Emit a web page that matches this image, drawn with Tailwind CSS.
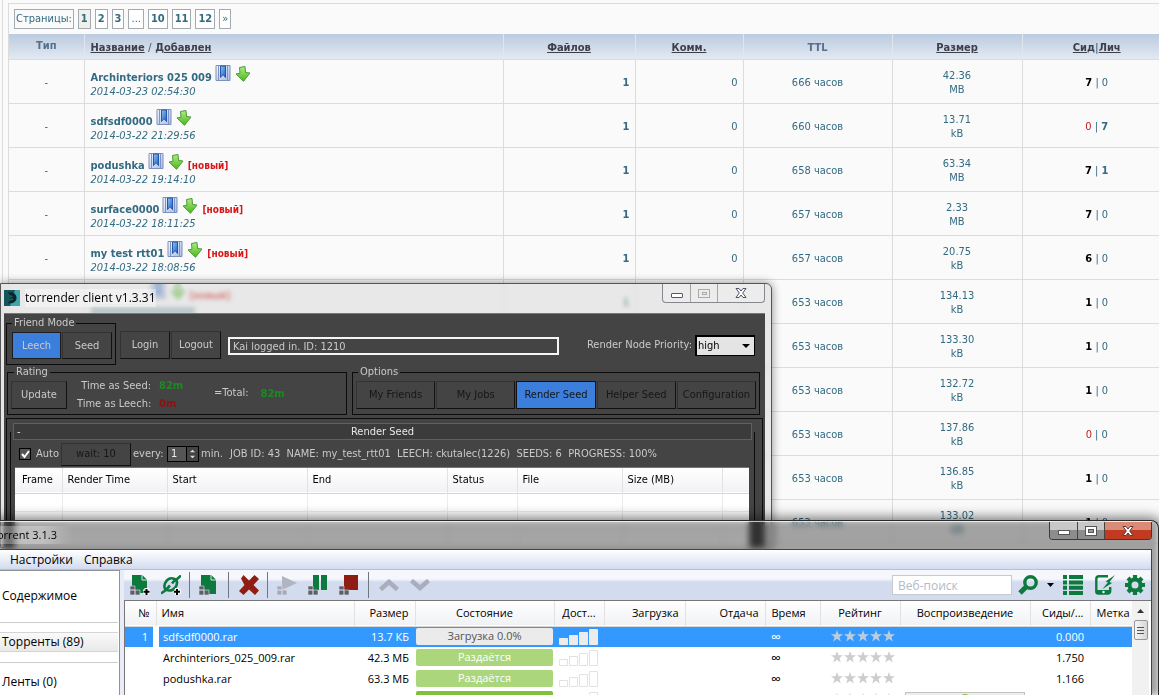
<!DOCTYPE html>
<html lang="ru">
<head>
<meta charset="utf-8">
<title>torrender</title>
<script src="https://cdn.jsdelivr.net/npm/@tailwindcss/browser@4"></script>
</head>
<body class="relative h-screen overflow-hidden bg-[#fafafa] font-['DejaVu_Sans_Condensed','Noto_Sans',sans-serif] text-[11px] leading-[14px] text-[#336b82]">

<svg class="absolute size-0" aria-hidden="true">
  <defs>
    <linearGradient id="gb" x1="0" y1="0" x2="1" y2="1"><stop offset="0" stop-color="#8fc4f6"/><stop offset="1" stop-color="#1d5fc4"/></linearGradient>
    <linearGradient id="gp" x1="0" y1="0" x2="1" y2="1"><stop offset="0" stop-color="#f4f8ff"/><stop offset="1" stop-color="#a9bbe0"/></linearGradient>
    <linearGradient id="gg" x1="0" y1="0" x2="0" y2="1"><stop offset="0" stop-color="#b4ec85"/><stop offset="1" stop-color="#45b818"/></linearGradient>
  </defs>
  <symbol id="book" viewBox="0 0 16 16"><path d="M1 .5h14v15H1z" fill="url(#gp)" stroke="#7b8fc0"/><path d="M3.500 1v14M12.500 1v14" stroke="#7d93c6"/><path d="M5.500 1h5v11.500L8 9.500l-2.500 3z" fill="url(#gb)" stroke="#2457a8"/></symbol>
  <symbol id="down" viewBox="0 0 16 16"><path d="M4.500 1.500L10 .5l.5 6 4.500.5L8.500 15.300 1 8l4-.8z" fill="url(#gg)" stroke="#4a9a38"/></symbol>
  <symbol id="star" viewBox="0 0 12 12"><path d="M6 0l1.500 4.300H12L8.400 7l1.400 4.500L6 8.800 2.200 11.500 3.600 7 0 4.300h4.500z"/></symbol>
</svg>

<main class="ml-[2px] min-h-full border-l border-[#dcdcdc] pl-[5px] pt-[3px]">
  <div class="border-l border-t border-[#dcdcdc]">
    <nav class="flex h-[30px] items-center gap-1 pl-[5px]" id="pages">
      <span class="border border-[#a3abb0] px-px leading-[18px]">Страницы:</span>
    </nav>
    <table class="w-full table-fixed border-collapse">
      <colgroup><col class="w-[75px]"><col><col class="w-[132px]"><col class="w-[108px]"><col class="w-[149px]"><col class="w-[130px]"><col class="w-[137px]"></colgroup>
      <thead>
        <tr class="h-[25px] bg-linear-to-b from-[#bccbe0] to-[#e2e9f2] text-[#566f8b]">
          <th class="border-r border-[#dfe6ee]">Тип</th>
          <th class="border-r border-[#dfe6ee] pl-[6px] pt-[3px] text-left"><a href="#" class="text-[#3d4047] underline">Название</a> / <a href="#" class="text-[#3d4047] underline">Добавлен</a></th>
          <th class="border-r border-[#dfe6ee] pt-[3px]"><a href="#" class="text-[#3d4047] underline">Файлов</a></th>
          <th class="border-r border-[#dfe6ee] pt-[3px]"><a href="#" class="text-[#3d4047] underline">Комм.</a></th>
          <th class="border-r border-[#dfe6ee] pt-[3px]">TTL</th>
          <th class="border-r border-[#dfe6ee] pt-[3px]"><a href="#" class="text-[#3d4047] underline">Размер</a></th>
          <th class="pl-3 pt-[3px]"><a href="#" class="text-[#3d4047] underline">Сид</a>|<a href="#" class="text-[#3d4047] underline">Лич</a></th>
        </tr>
      </thead>
      <tbody id="rows"></tbody>
    </table>
  </div>
</main>

<!-- torrender client window -->
<section class="absolute left-0 top-[283px] flex h-[265px] w-[772px] flex-col rounded-tr-md border border-[#555] bg-[#d8d8d8]/55 pl-[3px] pr-[6px] shadow-[0_0_10px_rgba(0,0,0,.45)] backdrop-blur-[2px]">
  <header class="flex h-[29px] shrink-0 items-start">
    <svg class="mt-[6px] size-4" viewBox="0 0 16 16"><rect width="16" height="16" fill="#3fa5a8"/><path d="M0 0h11L6 16H0z" fill="#15565c"/><path d="M4 2.500c5-1 8.500 1.500 8.500 5.500s-4 6-8.500 5l2-2.500c2 0 3-1 3-1.800L5 8l4-1c0-1.200-1-1.800-3-1.800z" fill="#08262b"/></svg>
    <h1 class="ml-[5px] mt-[5px] bg-white/40 font-['Open_Sans',sans-serif] text-[12px] leading-[18px] text-black">torrender client v1.3.31</h1>
    <div class="ml-auto flex h-[19px] w-[103px] rounded-b border border-t-0 border-[#85898d] bg-[#ececec]">
      <button class="flex w-[28px] items-center justify-center border-r border-[#a5a5a5]" aria-label="Minimize"><span class="mt-1 h-[5px] w-3 rounded-[1px] border border-[#555a66] bg-white"></span></button>
      <button class="flex w-[27px] items-center justify-center border-r border-[#a5a5a5]" aria-label="Maximize"><span class="flex h-[9px] w-3 items-center justify-center border border-[#aaa]"><span class="h-[3px] w-[5px] border border-[#aaa]"></span></span></button>
      <button class="flex flex-1 items-center justify-center" aria-label="Close"><svg class="h-[10px] w-3" viewBox="0 0 12 10"><path d="M1 .5h3l2 2.500 2-2.500h3L7.700 5 11 9.500H8L6 7 4 9.500H1L4.300 5z" fill="#fff" stroke="#4d5264"/></svg></button>
    </div>
  </header>
  <div class="flex min-h-0 flex-1 flex-col border-t border-[#777] bg-[#444] px-[2px] text-[#c9c9c9]">
    <div class="flex h-[51px] shrink-0 items-start">
      <fieldset class="mt-[2px] flex h-[49px] w-[110px] gap-px border border-[#0c0c0c] pl-[5px] pr-[3px] pt-[2px]">
        <legend class="px-[2px]">Friend Mode</legend>
        <button class="h-[27px] w-[49px] border border-[#1c1c1c] bg-[#3c7edb]">Leech</button>
        <button class="h-[27px] w-[50px] border border-[#111] border-t-[#333] border-l-[#333]">Seed</button>
      </fieldset>
      <button class="ml-[4px] mt-[17px] h-[28px] w-[50px] border border-[#111] border-l-[#333] border-t-[#333]">Login</button>
      <button class="ml-px mt-[17px] h-[28px] w-[50px] border border-[#111] border-l-[#333] border-t-[#333]">Logout</button>
      <input aria-label="Status" readonly value="Kai logged in. ID: 1210" class="ml-[7px] mt-[23px] h-[18px] w-[331px] border-2 border-[#f4f4f4] bg-transparent px-[3px] outline-none">
      <label for="prio" class="ml-auto mt-[24px]">Render Node Priority:</label>
      <div class="relative ml-[3px] mr-[8px] mt-[21px]">
        <select id="prio" class="h-[21px] w-[60px] appearance-none border-2 border-r border-b border-black bg-[#e4e4e4] pl-px text-black"><option>high</option></select>
        <svg class="pointer-events-none absolute right-[5px] top-[9px] h-[4px] w-[8px]" viewBox="0 0 8 4"><path d="M0 0h8L4 4z"/></svg>
      </div>
    </div>
    <div class="flex h-[53px] shrink-0 gap-[5px] pl-px">
      <fieldset class="flex h-[50px] w-[340px] items-start border border-[#0c0c0c] pl-[3px] pt-[2px]">
        <legend class="ml-[3px] px-[2px]">Rating</legend>
        <div class="flex w-full">
          <button class="h-[28px] w-[56px] border border-[#111] border-l-[#333] border-t-[#333]">Update</button>
          <dl class="ml-[10px] grid grid-cols-[74px_32px] grid-rows-[18px_18px] gap-x-[8px] -mt-[4px] text-right leading-[18px]">
            <dt class="whitespace-nowrap">Time as Seed:</dt><dd class="text-left font-bold text-[#1b8a22]">82m</dd>
            <dt class="whitespace-nowrap">Time as Leech:</dt><dd class="text-left font-bold text-[#8c1212]">0m</dd>
          </dl>
          <p class="ml-[23px] leading-[24px]">=Total:</p><p class="ml-[12px] leading-[26px] font-bold text-[#1b8a22]">82m</p>
        </div>
      </fieldset>
      <fieldset class="flex h-[50px] w-[408px] gap-px border border-[#0c0c0c] px-[3px] pt-[2px] text-[#161616]">
        <legend class="ml-[2px] px-[2px] text-[#c9c9c9]">Options</legend>
        <button class="h-[28px] flex-1 border border-[#111] border-l-[#333] border-t-[#333]">My Friends</button>
        <button class="h-[28px] flex-1 border border-[#111] border-l-[#333] border-t-[#333]">My Jobs</button>
        <button class="h-[28px] flex-1 border border-[#111] bg-[#3c7edb]">Render Seed</button>
        <button class="h-[28px] flex-1 border border-[#111] border-l-[#333] border-t-[#333]">Helper Seed</button>
        <button class="h-[28px] flex-1 border border-[#111] border-l-[#333] border-t-[#333]">Configuration</button>
      </fieldset>
    </div>
    <div class="flex min-h-0 flex-1 flex-col border border-b-0 border-[#0c0c0c] pl-[3px] pr-[7px] pt-[4px]">
      <button class="relative mx-[3px] h-[17px] shrink-0 border border-[#606060] bg-[#3b3b3b] text-[#e6e6e6]"><span class="absolute left-[3px]">-</span>Render Seed</button>
      <div class="-mt-[8px] flex min-h-0 flex-1 flex-col border-x border-[#0c0c0c] pl-[4px] pr-[5px] pt-[9px]">
        <div class="flex h-[26px] shrink-0 items-center whitespace-pre pl-[4px]">
          <label class="flex items-center gap-[5px]"><input type="checkbox" checked class="peer sr-only"><span class="flex size-[12px] items-center justify-center border border-black bg-[#555]"><svg class="size-[9px]" viewBox="0 0 9 9"><path d="M1 4l2.500 3L8 1" fill="none" stroke="#fff" stroke-width="2"/></svg></span>Auto</label>
          <button class="ml-[2px] h-[23px] w-[70px] border border-[#111] border-l-[#333] border-t-[#333] text-[#161616]">wait: 10</button>
          <label for="every" class="ml-[2px] w-[34px]">every:</label>
          <span class="flex h-[16px] w-[32px] border border-black"><input id="every" value="1" class="w-[18px] bg-[#555] pl-[3px] text-[#eee] outline-none"><svg class="h-full w-[13px] border-l border-black" viewBox="0 0 13 14"><path d="M6.500 2l3 3h-6zM6.500 12l3-3h-6z" fill="#ddd"/></svg></span>
          <span class="ml-[2px] w-[29px]">min.</span>
          <span>JOB ID: 43  NAME: my_test_rtt01  LEECH: ckutalec(1226)  SEEDS: 6  PROGRESS: 100%</span>
        </div>
        <div class="min-h-0 flex-1 border-t border-[#777] bg-white text-black">
          <table class="w-full table-fixed border-collapse">
            <colgroup><col class="w-[47px]"><col class="w-[105px]"><col class="w-[140px]"><col class="w-[140px]"><col class="w-[70px]"><col class="w-[105px]"><col class="w-[100px]"><col></colgroup>
            <thead class="text-left"><tr class="h-[25px] border-b border-[#d5d5d5] bg-linear-to-b from-white to-[#f1f2f4]">
              <th class="border-r border-[#e2e2e2] pl-[7px] font-normal">Frame</th><th class="border-r border-[#e2e2e2] pl-[5px] font-normal">Render Time</th><th class="border-r border-[#e2e2e2] pl-[5px] font-normal">Start</th><th class="border-r border-[#e2e2e2] pl-[5px] font-normal">End</th><th class="border-r border-[#e2e2e2] pl-[5px] font-normal">Status</th><th class="border-r border-[#e2e2e2] pl-[5px] font-normal">File</th><th class="border-r border-[#e2e2e2] pl-[5px] font-normal">Size (MB)</th><th></th>
            </tr></thead>
            <tbody id="frames"></tbody>
          </table>
        </div>
      </div>
    </div>
  </div>
</section>

<!-- torrent 3.1.3 window -->
<section class="absolute -left-1 bottom-0 right-0 top-[520px] flex flex-col rounded-tr-lg border border-b-0 border-[#2b2b2b] bg-white/5 pr-[6px] shadow-[0_0_12px_3px_rgba(0,0,0,.5)] backdrop-blur-[3px] backdrop-brightness-[.63]">
  <header class="flex h-[28px] shrink-0 items-start border-t border-white/70">
    <h2 class="mt-[4px] bg-linear-to-r from-white/30 from-60% to-transparent pr-4 font-['Open_Sans',sans-serif] text-[11px] leading-[18px] text-black">orrent 3.1.3</h2>
    <div class="ml-auto flex h-[18px] w-[103px] overflow-hidden rounded-b border border-t-0 border-[#3a3a3a]">
      <button class="flex w-[28px] items-center justify-center border-r border-[#444] bg-linear-to-b from-[#c8c8c8] from-50% to-[#8d8d8d] to-50%" aria-label="Minimize"><span class="mt-1 h-[5px] w-3 border border-[#555] bg-white"></span></button>
      <button class="flex w-[27px] items-center justify-center border-r border-[#444] bg-linear-to-b from-[#c8c8c8] from-50% to-[#8d8d8d] to-50%" aria-label="Maximize"><span class="flex h-[10px] w-3 items-center justify-center border border-[#555] bg-white"><span class="h-[4px] w-[6px] border border-[#555] bg-[#999]"></span></span></button>
      <button class="flex flex-1 items-center justify-center bg-linear-to-b from-[#dc8a78] from-45% to-[#c23a1f] to-50%" aria-label="Close"><svg class="h-[10px] w-3" viewBox="0 0 12 10"><path d="M1 .5h3l2 2.500 2-2.500h3L7.700 5 11 9.500H8L6 7 4 9.500H1L4.300 5z" fill="#fff" stroke="#5a3a3a"/></svg></button>
    </div>
  </header>
  <div class="flex min-h-0 flex-1 flex-col border-r border-t border-[#444] bg-[#e9ecf6] font-['Open_Sans',sans-serif] text-[11px] text-black">
    <nav class="flex h-5 shrink-0 gap-[11px] border-b border-[#b9bfcc] bg-linear-to-b from-white to-[#d3dbef] pl-[13px] text-[12px] leading-5"><a href="#">Настройки</a><a href="#">Справка</a></nav>
    <div class="flex min-h-0 flex-1">
      <aside class="flex w-[123px] shrink-0 flex-col border-r border-t border-[#8d929b] bg-white pr-px text-[12px] leading-[18px]">
        <a href="#" class="h-[52px] border-b border-[#ccc] pl-[5px] pt-[16px]">Содержимое</a>
        <a href="#" class="mt-[9px] h-[20px] border-y border-[#d4d4d4] bg-linear-to-b from-[#fafafa] to-[#e9e9e9] pl-[5px]">Торренты (89)</a>
        <a href="#" class="mt-[10px] border-t border-[#ccc] pl-[5px] pt-[10px]">Ленты (0)</a>
      </aside>
      <div class="ml-[4px] flex min-w-0 flex-1 flex-col">
        <div class="flex h-[30px] shrink-0 items-center bg-linear-to-b from-[#f6f7fc] from-30% to-[#d3dbee] to-40% pl-[6px]">
          <button aria-label="Add torrent"><svg class="size-5" viewBox="0 0 20 20"><path d="M2 0h10l5 5v13H2z" fill="#0c7a3c"/><path d="M12 0v5h5" fill="#0c7a3c" stroke="#dfe4f2"/><g fill="#5d5f66" stroke="#dfe4f2" stroke-width=".6"><path d="M0 11h5v4H0zM0 15h5v5H0zM5 15h5v5H5z"/></g><path d="M16.500 13v7M13 16.500h7" stroke="#fff" stroke-width="4"/><path d="M16.500 14v6M13.500 16.800h6" stroke="#000" stroke-width="2"/></svg></button>
          <button class="ml-[11px]" aria-label="Add from URL"><svg class="size-5" viewBox="0 0 20 20"><g fill="none" stroke="#0c7a3c" stroke-width="2.600"><path d="M0 18.500l5-3.500M15 5l5-4.500M4.500 15C1 9 7 2 12 3.500l2.500.8L11 8.500M15.500 5c2 6-3 11-7.500 10.500l-3-.7L9 10.500"/></g><path d="M16 13v7M13 16.500h7" stroke="#fff" stroke-width="4"/><path d="M16 14v6M13 16.800h6" stroke="#000" stroke-width="2"/></svg></button>
          <span class="ml-[8px] h-[26px] w-px bg-[#70757f]"></span>
          <button class="ml-[9px]" aria-label="Create torrent"><svg class="size-5" viewBox="0 0 20 20"><path d="M2 0h10l5 5v14H2z" fill="#0c7a3c"/><path d="M12 0v5h5" fill="#0c7a3c" stroke="#dfe4f2"/><g fill="#5d5f66" stroke="#dfe4f2" stroke-width=".6"><path d="M0 11h5v4H0zM0 15h5v5H0zM5 15h5v5H5z"/></g></svg></button>
          <span class="ml-[9px] h-[26px] w-px bg-[#70757f]"></span>
          <button class="ml-[10px]" aria-label="Remove"><svg class="size-5" viewBox="0 0 20 20"><path d="M2 3.500L4.500 0 10 5.500 15.500 0 20 4l-5.500 6 5.500 5.500-4 4.500-6-5.500L4.500 20 0 16l5.500-6z" fill="#8f1d14"/></svg></button>
          <span class="ml-[8px] h-[26px] w-px bg-[#70757f]"></span>
          <button class="ml-[9px]" aria-label="Start"><svg class="size-5" viewBox="0 0 20 20"><path d="M5 1l15 7L5 15z" fill="#b0b5c1"/><g fill="#a5aab6" stroke="#dfe4f2" stroke-width=".6"><path d="M0 11h5v4H0zM0 15h5v5H0zM5 15h5v5H5z"/></g></svg></button>
          <button class="ml-[11px]" aria-label="Pause"><svg class="size-5" viewBox="0 0 20 20"><path d="M5 0h6v15H5zM13 0h6v15h-6z" fill="#0c7a3c"/><g fill="#5d5f66" stroke="#dfe4f2" stroke-width=".6"><path d="M0 11h5v4H0zM0 15h5v5H0zM5 15h5v5H5z"/></g></svg></button>
          <button class="ml-[11px]" aria-label="Stop"><svg class="size-5" viewBox="0 0 20 20"><path d="M5 0h14v15H5z" fill="#8f1d14"/><g fill="#5d5f66" stroke="#dfe4f2" stroke-width=".6"><path d="M0 11h5v4H0zM0 15h5v5H0zM5 15h5v5H5z"/></g></svg></button>
          <span class="ml-[9px] h-[26px] w-px bg-[#70757f]"></span>
          <button class="ml-[10px]" aria-label="Up"><svg class="h-3 w-5" viewBox="0 0 20 12"><path d="M1.500 10.500L10 3l8.500 7.500" fill="none" stroke="#a9aebd" stroke-width="4.600"/></svg></button>
          <button class="ml-[11px]" aria-label="Down"><svg class="h-3 w-5" viewBox="0 0 20 12"><path d="M1.500 1.500L10 9l8.500-7.500" fill="none" stroke="#a9aebd" stroke-width="4.600"/></svg></button>
          <input placeholder="Веб-поиск" aria-label="Веб-поиск" class="ml-auto h-5 w-[120px] border border-[#c6c9d4] bg-white px-[5px] text-[12px] outline-none placeholder:text-[#b3bac8]">
          <button class="ml-[6px]" aria-label="Search"><svg class="size-5" viewBox="0 0 20 20"><circle cx="12.500" cy="7.500" r="5.700" fill="none" stroke="#0c7a3c" stroke-width="3.400"/><path d="M8.500 11.500L2 18" stroke="#0c7a3c" stroke-width="5"/></svg></button>
          <svg class="ml-[9px] h-1 w-[7px]" viewBox="0 0 7 4"><path d="M0 0h7L3.500 4z"/></svg>
          <button class="ml-[9px]" aria-label="List"><svg class="size-5" viewBox="0 0 20 20"><path d="M0 0h4v4H0zM0 5.500h4v4H0zM0 10.700h4v4H0zM0 16h4v4H0zM6 0h14v4H6zM6 5.500h14v4H6zM6 10.700h14v4H6zM6 16h14v4H6z" fill="#0c7a3c"/></svg></button>
          <button class="ml-3" aria-label="Remote"><svg class="size-5" viewBox="0 0 20 20"><path d="M13 1.300H4Q1.300 1.300 1.300 4v12.500q0 2 2.200 2h9q2.700 0 2.700-2.500v-4" fill="none" stroke="#0c7a3c" stroke-width="2.400"/><path d="M1.500 15h13v4h-13z" fill="#0c7a3c"/><circle cx="8.500" cy="17" r="1.200" fill="#fff"/><path d="M20 0l-9.500 6.500 2.500.8L7.500 14l9.500-6-2.500-1z" fill="#0c7a3c"/></svg></button>
          <button class="ml-[10px] mr-[6px]" aria-label="Settings"><svg class="size-5" viewBox="0 0 20 20"><circle cx="10" cy="10" r="5.500" fill="none" stroke="#0c7a3c" stroke-width="4"/><path d="M10 0v4M10 16v4M0 10h4M16 10h4M3 3l3 3M14 14l3 3M17 3l-3 3M6 14l-3 3" stroke="#0c7a3c" stroke-width="4.200"/></svg></button>
        </div>
        <div class="flex min-h-0 flex-1 border-l border-t border-[#777] bg-white pr-[2px]">
          <div class="min-w-0 flex-1 overflow-hidden">
            <table class="w-full table-fixed border-collapse whitespace-nowrap">
              <colgroup><col class="w-[31px]"><col><col class="w-[61px]"><col class="w-[139px]"><col class="w-[50px]"><col class="w-[81px]"><col class="w-[80px]"><col class="w-[55px]"><col class="w-[80px]"><col class="w-[130px]"><col class="w-[60px]"><col class="w-[42px]"></colgroup>
              <thead><tr class="h-[25px] border-b border-[#d5d5d5] bg-linear-to-b from-white to-[#f1f2f4]">
                <th class="border-r border-[#e2e2e2] pr-[6px] text-right font-normal">№</th><th class="border-r border-[#e2e2e2] pl-[5px] text-left font-normal">Имя</th><th class="border-r border-[#e2e2e2] pr-[6px] text-right font-normal">Размер</th><th class="border-r border-[#e2e2e2] font-normal">Состояние</th><th class="border-r border-[#e2e2e2] font-normal">Дост...</th><th class="border-r border-[#e2e2e2] pr-[6px] text-right font-normal">Загрузка</th><th class="border-r border-[#e2e2e2] pr-[6px] text-right font-normal">Отдача</th><th class="border-r border-[#e2e2e2] pl-[6px] text-left font-normal">Время</th><th class="border-r border-[#e2e2e2] font-normal">Рейтинг</th><th class="border-r border-[#e2e2e2] font-normal">Воспроизведение</th><th class="border-r border-[#e2e2e2] pr-[6px] text-right font-normal">Сиды/...</th><th class="pl-[6px] text-left font-normal">Метка</th>
              </tr></thead>
              <tbody id="torrents"></tbody>
            </table>
          </div>
          <div class="flex w-[17px] shrink-0 flex-col items-center bg-[#f1f1f1] pt-[8px]">
            <svg class="h-1 w-[7px]" viewBox="0 0 7 4"><path d="M0 4h7L3.500 0z" fill="#333"/></svg>
            <span class="mt-[7px] flex h-[20px] w-[14px] flex-col items-center justify-center gap-px rounded-[2px] border border-[#979797] bg-linear-to-r from-[#f6f6f6] to-[#d6d6d6]"><i class="h-px w-[7px] bg-[#555]"></i><i class="mt-px h-px w-[7px] bg-[#555]"></i><i class="mt-px h-px w-[7px] bg-[#555]"></i></span>
          </div>
        </div>
      </div>
    </div>
  </div>
</section>

<script>
const pages = ['1','2','3','…','10','11','12','»'];
document.getElementById('pages').insertAdjacentHTML('beforeend', pages.map((p, i) =>
  `<a href="#" class="border border-[#a3abb0] px-[2px] leading-[18px] ${i === 0 ? 'bg-[#efefec]' : 'bg-white'} ${/\d/.test(p) ? 'font-bold' : ''}">${p === '…' ? '...' : p}</a>`).join(''));

const N = '<b class="font-bold text-black">', R = '<span class="text-[#c02020]">', B = '<b class="font-bold">';
const rows = [
  ['Archinteriors 025 009','2014-03-23 02:54:30',0,'666','42.36','MB',N+'7</b>','0'],
  ['sdfsdf0000','2014-03-22 21:29:56',0,'660','13.71','kB',R+'0</span>',B+'7</b>'],
  ['podushka','2014-03-22 19:14:10',1,'658','63.34','MB',N+'7</b>',B+'1</b>'],
  ['surface0000','2014-03-22 18:11:25',1,'657','2.33','MB',N+'7</b>','0'],
  ['my test rtt01','2014-03-22 18:08:56',1,'657','20.75','kB',N+'6</b>','0'],
  ['','',1,'653','134.13','kB',N+'1</b>','0'],
  ['','',0,'653','133.30','kB',N+'1</b>','0'],
  ['','',0,'653','132.72','kB',N+'1</b>','0'],
  ['','',0,'653','137.86','kB',R+'0</span>','0'],
  ['','',0,'653','136.85','kB',N+'1</b>','0'],
  ['','',0,'653','133.02','kB',N+'1</b>','0'],
];
document.getElementById('rows').innerHTML = rows.map((r, i) => `<tr class="h-[44px] border-y border-[#dcdcdc] [&>td]:pt-[4px]">
<td class="border-r border-[#dcdcdc] text-center">${i < 5 ? '-' : ''}</td>
<td class="border-r border-[#dcdcdc] pl-[6px]"><div class="flex h-[18px] items-end whitespace-nowrap"><a href="#" class="font-bold">${r[0] || '<span class="block w-[56px]"></span>'}</a>${r[0] || r[2] ? '<svg class="mb-[4px] ml-[3px] size-4"><use href="#book"/></svg><svg class="mb-[3px] ml-[4px] size-4"><use href="#down"/></svg>' : ''}${r[2] ? '<b class="ml-[4px] text-[10px] text-[#d81818]">[новый]</b>' : ''}</div><i class="block h-[14px]">${r[1] || (r[2] ? '<span class="mt-1 block h-2 w-[104px] bg-[#336b82]/50"></span>' : '')}</i></td>
<td class="border-r border-[#dcdcdc] pr-[5px] text-right font-bold">${i < 6 ? '1' : ''}</td>
<td class="border-r border-[#dcdcdc] pr-[5px] text-right">${i < 5 ? '0' : ''}</td>
<td class="border-r border-[#dcdcdc] text-center">${r[3]} часов</td>
<td class="border-r border-[#dcdcdc] text-center">${r[4]}<br>${r[5]}</td>
<td class="pl-3 text-center">${r[6]} | ${r[7]}</td></tr>`).join('');

document.getElementById('frames').innerHTML = [0,1,2,3].map(() => '<tr class="h-[18px] border-b border-[#ececec]">' + '<td class="border-r border-[#ececec]"></td>'.repeat(7) + '<td></td></tr>').join('');

const bars = sel => `<svg class="mx-auto h-4 w-10" viewBox="0 0 40 16" fill="${sel ? '#ececec' : '#fff'}" stroke="${sel ? '#ececec' : '#e2e2e2'}"><path d="M.5 9.500h8v6h-8zM10.500 6.500h8v9h-8zM20.500 3.500h8v12h-8zM30.500.5h8v15h-8z"/></svg>`;
const stars = sel => `<div class="flex justify-center gap-px pb-[2px] pl-[6px] ${sel ? 'fill-[#bccde0]' : 'fill-[#cdcdcd]'}">` + '<svg class="size-3"><use href="#star"/></svg>'.repeat(5) + '</div>';
const ts = [
  ['1','sdfsdf0000.rar','13.7 КБ','Загрузка 0.0%','∞','0.000','bg-[#ebebeb] text-[#555]'],
  ['','Archinteriors_025_009.rar','42.3 МБ','Раздаётся','∞','1.750','bg-[#abd67c] text-white'],
  ['','podushka.rar','63.3 МБ','Раздаётся','∞','1.166','bg-[#abd67c] text-white'],
  ['','','','','','','bg-[#7fc13c]'],
];
document.getElementById('torrents').innerHTML = ts.map((t, i) => `<tr class="h-[21px] ${i ? '' : 'bg-[#3399ff] text-white'}">
<td class="pr-[5px] text-right">${t[0]}</td>
<td class="border-l-[6px] border-white pl-[4px]">${t[1]}</td>
<td class="pr-[6px] text-right">${t[2]}</td>
<td class="px-px"><div class="h-[17px] rounded-[2px] text-center leading-[16px] ${t[6]}">${t[3]}</div></td>
<td class="p-0">${bars(i === 0)}</td><td></td><td></td>
<td class="pl-[6px] text-[14px]">${t[4]}</td>
<td>${stars(i === 0)}</td>
<td class="px-[5px]">${i === 3 ? '<div class="h-[16px] border border-[#c2c2c2] bg-[#ededed]"><svg class="mx-auto mt-px size-3" viewBox="0 0 12 12"><circle cx="6" cy="6" r="6" fill="#7fc13c"/></svg></div>' : ''}</td>
<td class="pr-[6px] text-right">${t[5]}</td><td></td></tr>`).join('');
</script>
</body>
</html>
